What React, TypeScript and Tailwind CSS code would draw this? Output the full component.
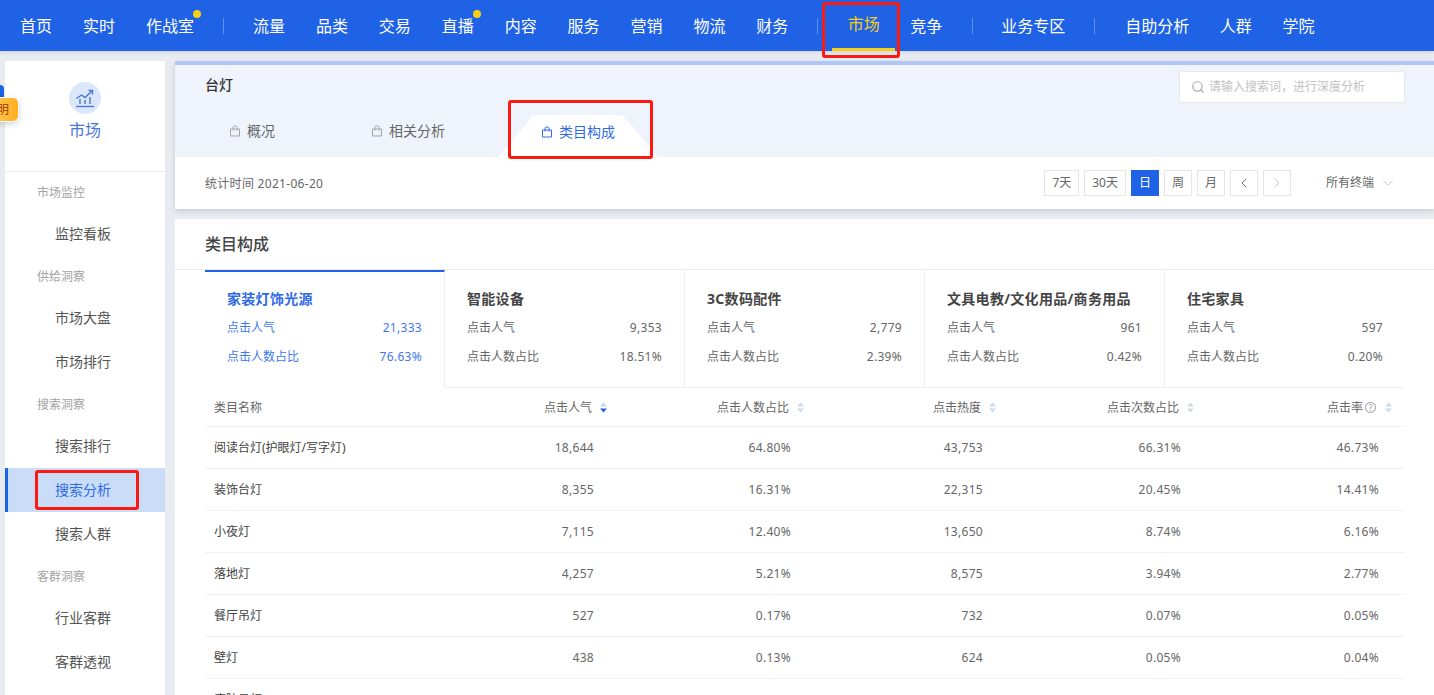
import type React from "react"
import { ChevronDown, ChevronLeft, ChevronRight, Search } from "lucide-react"

const font = { fontFamily: '"Noto Sans", "Noto Sans CJK SC", sans-serif' }

const navGroups = [
  [
    { label: "首页" },
    { label: "实时" },
    { label: "作战室", dot: true },
  ],
  [
    { label: "流量" },
    { label: "品类" },
    { label: "交易" },
    { label: "直播", dot: true },
    { label: "内容" },
    { label: "服务" },
    { label: "营销" },
    { label: "物流" },
    { label: "财务" },
  ],
]

const sideMenu = [
  { title: "市场监控", items: ["监控看板"] },
  { title: "供给洞察", items: ["市场大盘", "市场排行"] },
  { title: "搜索洞察", items: ["搜索排行", "搜索分析", "搜索人群"] },
  { title: "客群洞察", items: ["行业客群", "客群透视"] },
]

const categories = [
  { name: "家装灯饰光源", clicks: "21,333", share: "76.63%" },
  { name: "智能设备", clicks: "9,353", share: "18.51%" },
  { name: "3C数码配件", clicks: "2,779", share: "2.39%" },
  { name: "文具电教/文化用品/商务用品", clicks: "961", share: "0.42%" },
  { name: "住宅家具", clicks: "597", share: "0.20%" },
]

// last row is cut off by the window, its numbers are not visible
const rows = [
  ["阅读台灯(护眼灯/写字灯)", "18,644", "64.80%", "43,753", "66.31%", "46.73%"],
  ["装饰台灯", "8,355", "16.31%", "22,315", "20.45%", "14.41%"],
  ["小夜灯", "7,115", "12.40%", "13,650", "8.74%", "6.16%"],
  ["落地灯", "4,257", "5.21%", "8,575", "3.94%", "2.77%"],
  ["餐厅吊灯", "527", "0.17%", "732", "0.07%", "0.05%"],
  ["壁灯", "438", "0.13%", "624", "0.05%", "0.04%"],
  ["庭院吊灯", "", "", "", "", ""],
]

function Bag({ className }: { className?: string }) {
  return (
    <svg viewBox="0 0 12 12" className={className} fill="none" stroke="currentColor" strokeWidth="1">
      <path d="M1.5 4h9v7h-9z" />
      <path d="M4 5.5V2.2C4 1.5 4.5 1 5.2 1h1.6C7.5 1 8 1.5 8 2.2v3.3" />
    </svg>
  )
}

function SortIcon({ active }: { active?: boolean }) {
  return (
    <svg viewBox="0 0 7 11" className="w-[7px] h-[11px]">
      <path d="M3.5 0.5 7 4.6H0z" fill={active ? "#c3d6f2" : "#cfdcea"} />
      <path d="M3.5 10.5 0 6.4h7z" fill={active ? "#2062e6" : "#cfdcea"} />
    </svg>
  )
}

function RedBox({ className }: { className: string }) {
  return <div className={`absolute border-[3px] border-[#fb1a12] rounded-[3px] pointer-events-none ${className}`} />
}

function NavItem({ label, dot }: { label: string; dot?: boolean }) {
  return (
    <span className="relative text-[16px] leading-[22px] text-white">
      {label}
      {dot && <span className="absolute -right-[7px] -top-[5px] w-2 h-2 rounded-full bg-[#f5d016]" />}
    </span>
  )
}

function NavSep() {
  return <span className="block w-px h-4 bg-white/30" />
}

function TopNav() {
  return (
    <div className="relative h-[51px] shrink-0 bg-[#2062e6] flex items-center pl-5 shadow-[0_1px_4px_rgba(0,0,0,0.12)]">
      <div className="flex items-center gap-[31px]">
        {navGroups[0].map((n) => <NavItem key={n.label} {...n} />)}
      </div>
      <div className="ml-[29px] mr-[29px]"><NavSep /></div>
      <div className="flex items-center gap-[30.9px]">
        {navGroups[1].map((n) => <NavItem key={n.label} {...n} />)}
      </div>
      <div className="ml-[29px]"><NavSep /></div>
      <div className="relative w-[63px] h-[51px] ml-[14px] flex items-center justify-center border-b-[3px] border-[#f5d016] text-[16px] text-[#f5d016]">
        市场
      </div>
      <div className="ml-[15px]"><NavItem label="竞争" /></div>
      <div className="ml-[30px] mr-[28px]"><NavSep /></div>
      <NavItem label="业务专区" />
      <div className="ml-[29px] mr-[30px]"><NavSep /></div>
      <div className="flex items-center gap-[30.5px]">
        <NavItem label="自助分析" />
        <NavItem label="人群" />
        <NavItem label="学院" />
      </div>
      <RedBox className="left-[822px] top-[2px] w-[78px] h-[56px] z-20" />
    </div>
  )
}

function Sidebar() {
  return (
    <aside className="relative w-[160px] shrink-0 bg-white">
      <div className="h-[111px] flex flex-col items-center border-b border-[#e8ebf0]">
        <div className="mt-[21px] w-8 h-8 rounded-full bg-[#dbe6fb] flex items-center justify-center">
          <svg viewBox="0 0 20 20" className="w-5 h-5 text-[#4a76d8]" fill="none" stroke="currentColor" strokeWidth="1.4">
            <path d="M1 18.5h18" />
            <path d="M1.5 10.5 6.5 7l3.5 2.5L17 3" />
            <path d="M13.5 2.5H17.5V6.5" />
            <path d="M5 11v5M10 12v4M15 9v7" />
          </svg>
        </div>
        <div className="mt-[5px] text-[16px] leading-[22px] text-[#4a76d8]">市场</div>
      </div>
      {sideMenu.map((g) => (
        <div key={g.title}>
          <div className="h-10 flex items-center pl-8 pt-[2px] text-[12px] text-[#a3a3a3]">{g.title}</div>
          {g.items.map((item) => (
            <div
              key={item}
              className={
                item === "搜索分析"
                  ? "relative h-11 flex items-center pl-[47px] pb-[2px] text-[14px] text-[#2f6ae6] bg-[#c9ddf8] border-l-[3px] border-[#1a62e6]"
                  : "h-11 flex items-center pl-[50px] pb-[2px] text-[14px] text-[#555]"
              }
            >
              {item}
            </div>
          ))}
        </div>
      ))}
      <RedBox className="left-[30px] top-[409px] w-[104px] h-[40px]" />
    </aside>
  )
}

function HeaderCard() {
  return (
    <div className="relative bg-white border-t-4 border-[#b0c6f6] shadow-[0_2px_5px_rgba(0,0,0,0.14)]">
      <div className="relative h-[92px] bg-[#eff4fc]">
        <div className="flex justify-between pl-[30px] pr-[29px]">
          <div className="mt-[10px] text-[14px] leading-5 font-medium text-[#333]">台灯</div>
          <div className="mt-[6px] w-[226px] h-8 bg-white border border-[#e6e8ec] rounded-[2px] flex items-center pl-[11px] gap-[4px]">
            <Search className="w-[14px] h-[14px] text-[#aaa]" />
            <span className="text-[12px] text-[#c2c2c2]">请输入搜索词，进行深度分析</span>
          </div>
        </div>
        <div className="absolute left-[54px] top-[56px] flex items-center gap-[6px] text-[14px] leading-5 text-[#666]">
          <Bag className="w-3 h-3 text-[#a5a5a5]" />
          概况
        </div>
        <div className="absolute left-[196px] top-[56px] flex items-center gap-[6px] text-[14px] leading-5 text-[#666]">
          <Bag className="w-3 h-3 text-[#a5a5a5]" />
          相关分析
        </div>
        <div className="absolute left-[323px] top-[50px] w-[160px] h-[42px] bg-white [clip-path:polygon(0_100%,22%_2%,26%_0,74%_0,78%_2%,100%_100%)] flex items-center justify-center pb-[8px] gap-[6px] text-[14px] leading-5 text-[#2f6ae6]">
          <Bag className="w-3 h-3" />
          类目构成
        </div>
      </div>
      <div className="h-[52px] flex items-center pl-[30px] pr-[37px] text-[12px] text-[#666]">
        <span className="tracking-[0.3px] pt-[1px]">统计时间 2021-06-20</span>
        <div className="ml-auto flex items-center gap-[5px]">
          {["7天", "30天"].map((t) => (
            <span key={t} className="h-[26px] px-[7px] flex items-center border border-[#e6e6e6] text-[#666]">{t}</span>
          ))}
          <span className="h-[26px] w-7 flex items-center justify-center bg-[#2062e6] text-white">日</span>
          {["周", "月"].map((t) => (
            <span key={t} className="h-[26px] w-7 flex items-center justify-center border border-[#e6e6e6] text-[#666]">{t}</span>
          ))}
          <span className="h-[26px] w-7 flex items-center justify-center border border-[#e6e6e6]">
            <ChevronLeft className="w-4 h-4 text-[#666]" strokeWidth={1.5} />
          </span>
          <span className="h-[26px] w-7 flex items-center justify-center border border-[#e6e6e6]">
            <ChevronRight className="w-4 h-4 text-[#c9c9c9]" strokeWidth={1.5} />
          </span>
        </div>
        <span className="ml-[35px] text-[#666]">所有终端</span>
        <ChevronDown className="ml-[5px] w-[18px] h-[18px] text-[#c5c5c5]" strokeWidth={1.2} />
      </div>
      <RedBox className="left-[333px] top-[35px] w-[145px] h-[59px]" />
    </div>
  )
}

function CategoryCard({ name, clicks, share, active }: { name: string; clicks: string; share: string; active?: boolean }) {
  return (
    <div
      className={
        active
          ? "h-[118px] pl-[22px] pr-[22px] pt-[17px] border-t-2 border-[#2062e6] border-r border-r-[#eef0f3] text-[#3f78ec]"
          : "h-[118px] pl-[22px] pr-[22px] pt-[19px] border-r border-b border-[#eef0f3] text-[#666] last:border-r-0"
      }
    >
      <div className={`text-[14px] leading-5 font-bold tracking-[0.3px] whitespace-nowrap ${active ? "text-[#2f6ae6]" : "text-[#444]"}`}>{name}</div>
      <div className="mt-[10px] flex justify-between text-[12px] leading-[18px]">
        <span>点击人气</span>
        <span className="tracking-[0.3px]">{clicks}</span>
      </div>
      <div className="mt-[11px] flex justify-between text-[12px] leading-[18px]">
        <span>点击人数占比</span>
        <span className="tracking-[0.3px]">{share}</span>
      </div>
    </div>
  )
}

const tableCols = "grid grid-cols-[205px_200px_197px_192px_198px_198px] pr-[10px]"

function HeadCell({ label, active, help }: { label: string; active?: boolean; help?: boolean }) {
  return (
    <div className="flex items-center justify-end pr-[3px]">
      <span>{label}</span>
      {help && (
        <span className="ml-[2px] w-[11px] h-[11px] rounded-full border border-[#999] text-[8px] leading-[9px] text-center text-[#999]">?</span>
      )}
      <span className={help ? "ml-[9px] flex" : "ml-[8px] flex"}>
        <SortIcon active={active} />
      </span>
    </div>
  )
}

function DataTable() {
  return (
    <div className="mr-[29px] ml-[30px]">
      <div className={`${tableCols} h-[39px] pt-[1px] items-center text-[12px] text-[#666] border-b border-[#f0f1f3]`}>
        <div className="pl-[9px]">类目名称</div>
        <HeadCell label="点击人气" active />
        <HeadCell label="点击人数占比" />
        <HeadCell label="点击热度" />
        <HeadCell label="点击次数占比" />
        <HeadCell label="点击率" help />
      </div>
      {rows.map((r) => (
        <div key={r[0]} className={`${tableCols} h-[42px] pt-[1px] items-center text-[12px] text-[#666] border-b border-[#f0f1f3]`}>
          <div className="pl-[9px] text-[#444] whitespace-nowrap">{r[0]}</div>
          {r.slice(1).map((v, i) => (
            <div key={i} className="text-right pr-[16px] tracking-[0.3px]">{v}</div>
          ))}
        </div>
      ))}
    </div>
  )
}

function ContentCard() {
  return (
    <div className="mt-[10px] flex-1 bg-white">
      <div className="h-[51px] flex items-center pl-[30px] text-[16px] font-medium text-[#444] border-b border-[#e8ebf0]">
        类目构成
      </div>
      <div className="ml-[30px] mr-[29px] grid grid-cols-5">
        {categories.map((c, i) => (
          <CategoryCard key={c.name} {...c} active={i === 0} />
        ))}
      </div>
      <DataTable />
    </div>
  )
}

export default function App() {
  return (
    <div className="relative w-[1434px] h-[695px] overflow-hidden bg-[#e8ebf0] flex flex-col" style={font}>
      <TopNav />
      <div className="flex-1 flex mt-[10px] pl-[5px] gap-[10px] min-h-0">
        <Sidebar />
        <main className="flex-1 flex flex-col min-w-0">
          <HeaderCard />
          <ContentCard />
        </main>
      </div>
      {/* floating helper tab on the left edge */}
      <div className="absolute left-0 top-[85px] w-[4px] h-[12px] bg-[#1a62e6] rounded-tr-[4px]" />
      <div className="absolute -left-[8px] top-[97px] w-[27px] h-[25px] rounded-[6px] bg-gradient-to-r from-[#ffc94d] to-[#ffad1f] border border-white shadow-[0_2px_6px_rgba(0,0,0,0.18)] flex items-center justify-end pr-[9px] text-[12px] text-[#9c3a06]">
        明
      </div>
    </div>
  )
}
